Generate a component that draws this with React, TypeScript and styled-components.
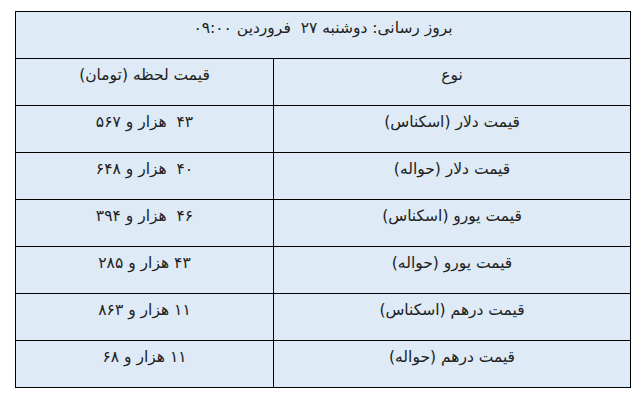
import React from 'react'
import styled, { createGlobalStyle } from 'styled-components'

const GlobalStyle = createGlobalStyle`
  html, body {
    margin: 0;
    padding: 0;
    background: #ffffff;
  }
  body {
    font-family: "DejaVu Sans", "Noto Sans", sans-serif;
  }
`

const Page = styled.div`
  padding: 11px 0 0 15px;
`

const PriceTable = styled.table`
  direction: rtl;
  border-collapse: collapse;
  width: 615px;
  table-layout: fixed;
  background: #deeaf6;
  color: #222222;
  font-size: 15.5px;
`

const Column = styled.col<{ $width: number }>`
  width: ${(p) => p.$width}px;
`

const Row = styled.tr`
  height: 47px;
`

const Cell = styled.td`
  border: 1px solid #000000;
  padding: 6px 6px 0;
  vertical-align: top;
  text-align: center;
  line-height: 20px;
  white-space: pre;
`

const prices = [
  { kind: 'قیمت دلار (اسکناس)', value: '۴۳  هزار و ۵۶۷' },
  { kind: 'قیمت دلار (حواله)', value: '۴۰  هزار و ۶۴۸' },
  { kind: 'قیمت یورو (اسکناس)', value: '۴۶  هزار و ۳۹۴' },
  { kind: 'قیمت یورو (حواله)', value: '۴۳ هزار و ۲۸۵' },
  { kind: 'قیمت درهم (اسکناس)', value: '۱۱ هزار و ۸۶۳' },
  { kind: 'قیمت درهم (حواله)', value: '۱۱ هزار و ۶۸' },
]

export default function App(): React.ReactElement {
  return (
    <Page>
      <GlobalStyle />
      <PriceTable>
        <colgroup>
          <Column $width={357} />
          <Column $width={258} />
        </colgroup>
        <tbody>
          <Row>
            <Cell colSpan={2}>بروز رسانی: دوشنبه ۲۷  فروردین ۰۹:۰۰</Cell>
          </Row>
          <Row>
            <Cell>نوع</Cell>
            <Cell>قیمت لحظه (تومان)</Cell>
          </Row>
          {prices.map((p) => (
            <Row key={p.kind}>
              <Cell>{p.kind}</Cell>
              <Cell>{p.value}</Cell>
            </Row>
          ))}
        </tbody>
      </PriceTable>
    </Page>
  )
}
